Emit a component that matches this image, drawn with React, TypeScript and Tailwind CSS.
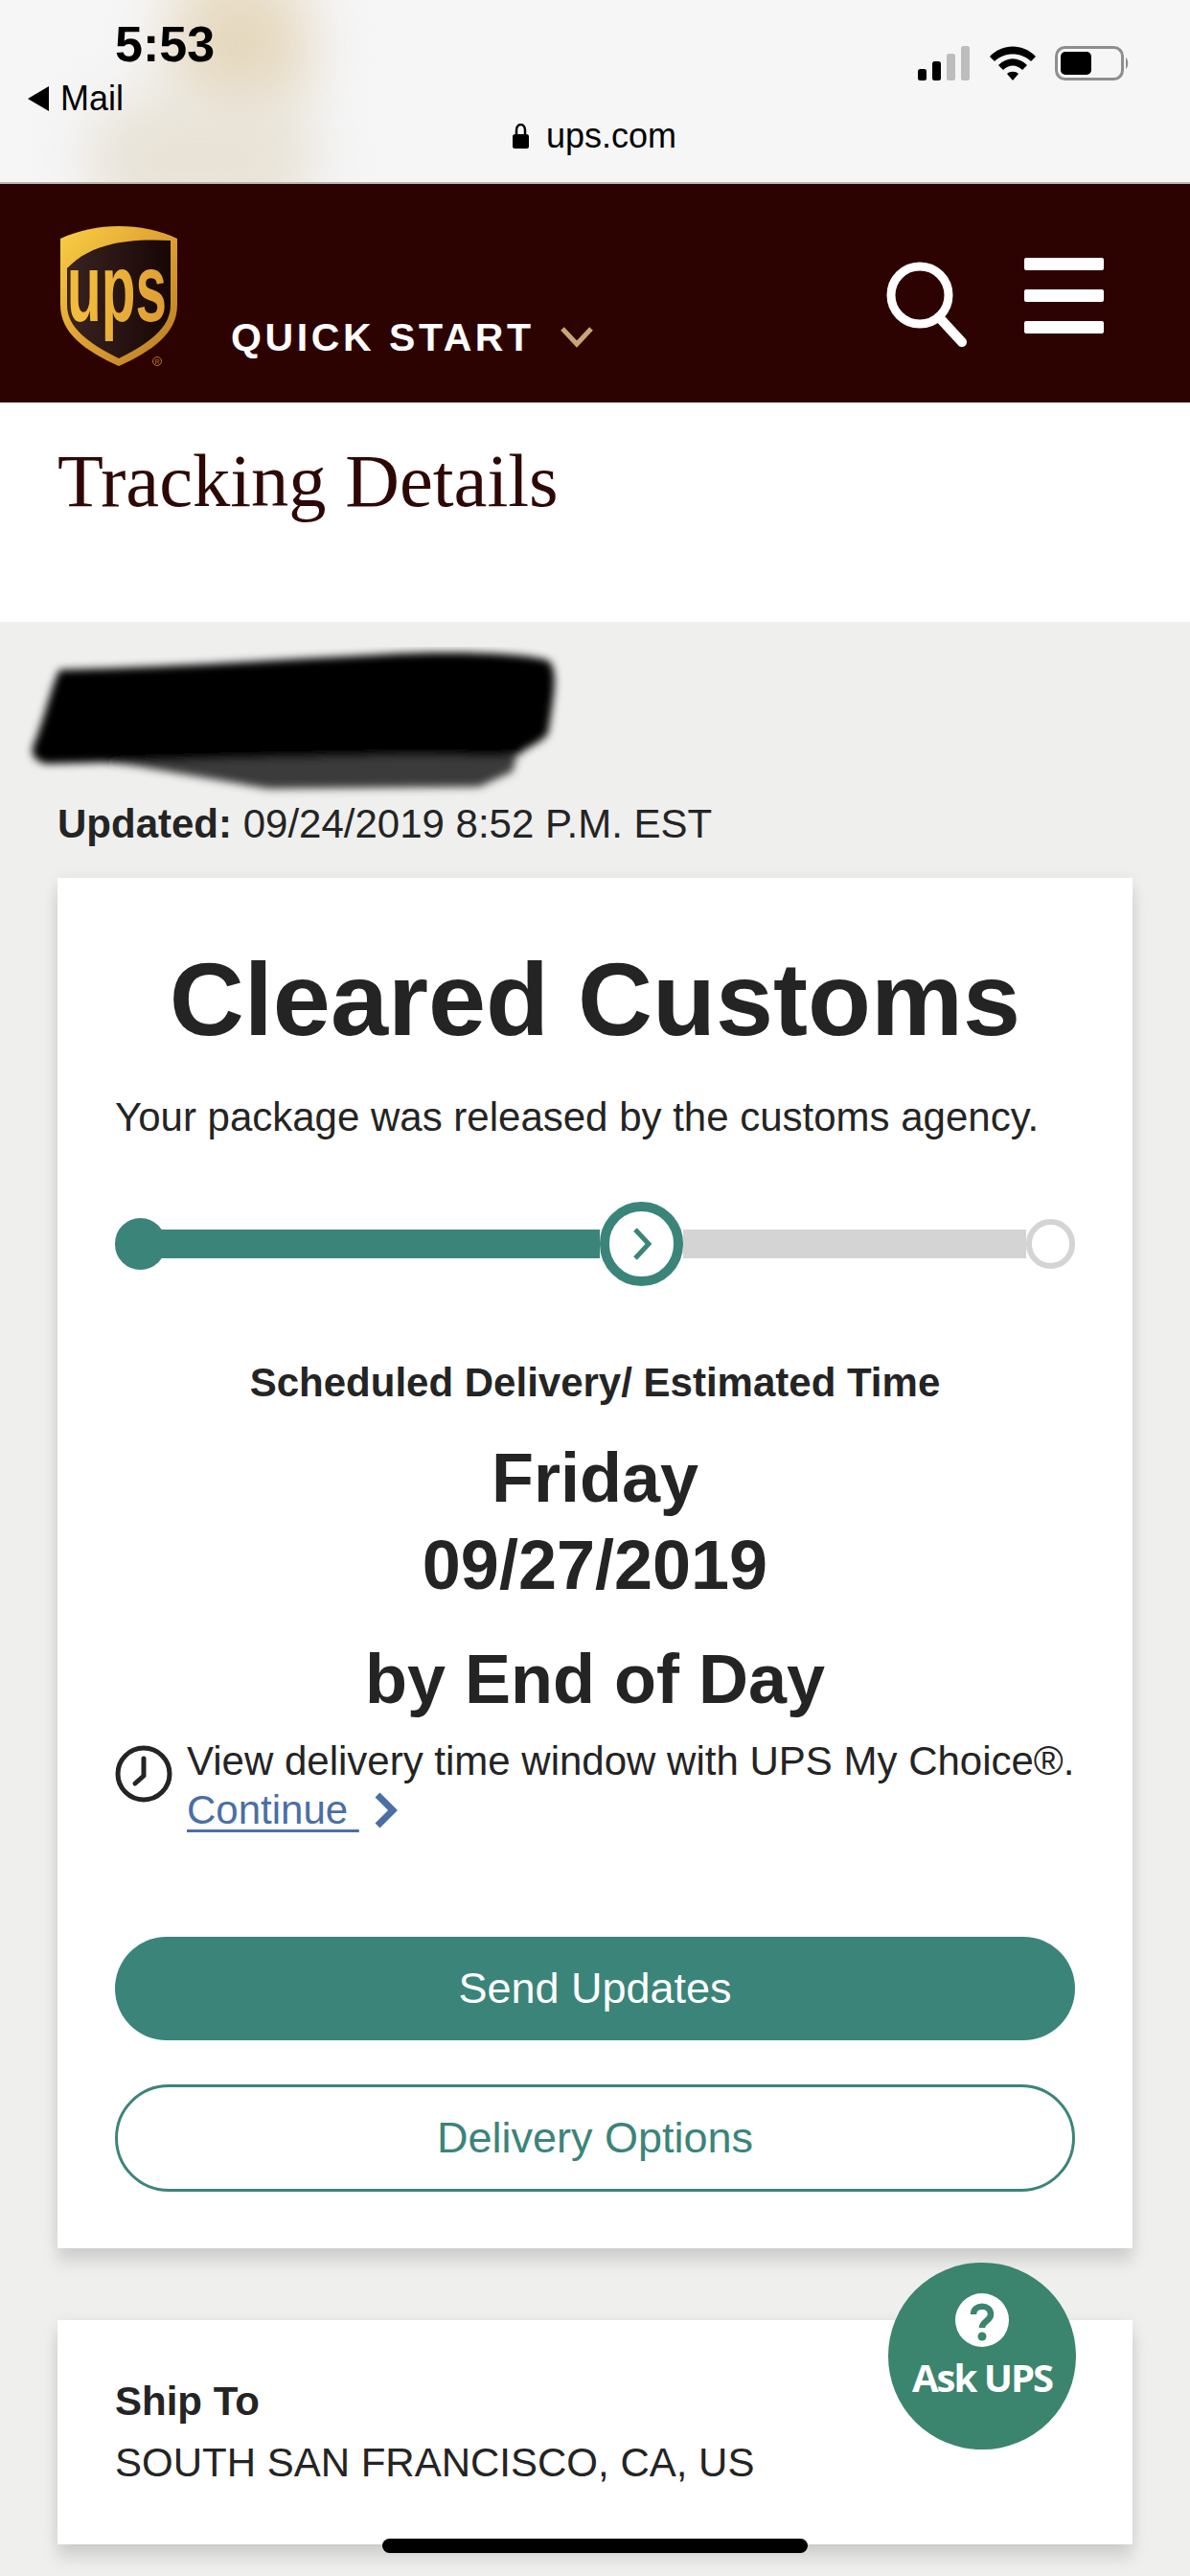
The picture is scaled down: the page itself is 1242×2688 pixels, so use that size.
const sans = "font-['Liberation_Sans',Arial,sans-serif]";

function Logo() {
  return (
    <svg width="130" height="156" viewBox="0 0 130 156" className="block overflow-visible">
      <defs>
        <linearGradient id="g" x1="0" y1="0" x2="1" y2="1">
          <stop offset="0" stopColor="#f9d044" />
          <stop offset="0.5" stopColor="#e0a032" />
          <stop offset="1" stopColor="#b57a22" />
        </linearGradient>
        <linearGradient id="t" gradientUnits="userSpaceOnUse" x1="0" y1="50" x2="130" y2="110">
          <stop offset="0" stopColor="#f2bb3c" />
          <stop offset="1" stopColor="#dc9b33" />
        </linearGradient>
        <linearGradient id="d" x1="0" y1="0" x2="1" y2="0">
          <stop offset="0" stopColor="#3a2320" />
          <stop offset="1" stopColor="#170605" />
        </linearGradient>
      </defs>
      <path d="M2 13 C22 4 42 0 63 0 C85 0 105 4 124 13 L124 82 C124 112 98 130 63 146 C28 130 2 112 2 82 Z" fill="url(#g)" />
      <path d="M9 44 C30 22 62 12 117 15 L117 82 C117 106 95 122 63 138 C31 122 9 106 9 82 Z" fill="url(#d)" />
      <text transform="translate(9 99) scale(0.585 1)" fontFamily="'Liberation Sans', Arial, sans-serif" fontWeight="700" fontSize="100" fill="url(#t)">ups</text>
      <circle cx="103" cy="141" r="4.5" fill="none" stroke="#b57a22" strokeWidth="1" />
      <text x="103" y="143.5" textAnchor="middle" fontFamily="'Liberation Sans', Arial, sans-serif" fontSize="7" fill="#b57a22">R</text>
    </svg>
  );
}

function StatusIcons() {
  return (
    <div className="flex items-end gap-[19px] absolute left-[958px] top-[48px]">
      <svg width="56" height="36" viewBox="0 0 56 36">
        <rect x="0" y="24" width="9" height="12" rx="2.5" fill="#000" />
        <rect x="15" y="16" width="9" height="20" rx="2.5" fill="#000" />
        <rect x="30" y="8" width="9" height="28" rx="2.5" fill="#bdbdbd" />
        <rect x="45" y="0" width="9" height="36" rx="2.5" fill="#bdbdbd" />
      </svg>
      <svg width="48" height="36" viewBox="0 0 48 36">
        <path d="M0 11 C13 -3 35 -3 48 11 L43 16 C33 6 15 6 5 16 Z" fill="#000" />
        <path d="M9 20 C18 11 30 11 39 20 L34 25 C28 19 20 19 14 25 Z" fill="#000" />
        <path d="M18 29 C21 26 27 26 30 29 L24 36 Z" fill="#000" />
      </svg>
      <svg width="78" height="36" viewBox="0 0 78 36" className="ml-[1px]">
        <rect x="1.5" y="1.5" width="69" height="33" rx="9" fill="none" stroke="#8e8e8e" strokeWidth="3" />
        <rect x="6" y="6" width="32" height="24" rx="5" fill="#000" />
        <path d="M74 12 C77 14 77 22 74 24 Z" fill="#8e8e8e" />
      </svg>
    </div>
  );
}

function Redaction() {
  return (
    <svg width="580" height="160" viewBox="0 0 580 160" className="block ml-[-40px] mt-[26px]">
      <defs>
        <filter id="b" x="-10%" y="-20%" width="120%" height="140%">
          <feGaussianBlur stdDeviation="4.5" />
        </filter>
      </defs>
      <g filter="url(#b)">
        <path d="M20 112 L120 124 L260 148 L480 146 L515 130 L525 90 L400 96 L18 100 Z" fill="#3a3a3a" />
        <path d="M42 24 C150 22 260 14 380 8 C450 4 520 6 552 14 C562 24 560 40 552 90 C546 100 530 104 522 112 C500 118 450 112 380 114 C250 116 100 120 28 122 C12 118 12 108 16 100 C28 70 34 40 42 24 Z" fill="#000" />
      </g>
    </svg>
  );
}

export default function App() {
  return (
    <div className={`relative h-[2688px] w-[1242px] overflow-hidden bg-[#efefee] text-[#242424] ${sans}`}>
      <div className="relative h-[192px] overflow-hidden border-b-2 border-[#b9b6b0] bg-[#f6f6f7]">
        <div className="absolute left-[175px] top-[-40px] h-[170px] w-[150px] rounded-full bg-[#e6d9c0] blur-[30px]" />
        <div className="absolute left-[90px] top-[100px] h-[130px] w-[240px] rounded-full bg-[#e8e2d6] blur-[30px]" />
        <div className="absolute left-[120px] top-[16px] text-[52px] font-bold leading-[60px] text-black">5:53</div>
        <div className="absolute left-[29px] top-[83px] flex items-center gap-[12px] text-[36px] leading-[40px] text-black">
          <svg width="22" height="26" viewBox="0 0 22 26"><path d="M22 0 V26 L0 13 Z" fill="#000" /></svg>
          <span>Mail</span>
        </div>
        <div className="absolute left-[535px] top-[122px] flex items-center gap-[18px] text-[36px] leading-[40px] text-black">
          <svg width="17" height="26" viewBox="0 0 17 26">
            <path d="M4 11 V7 C4 -1 13 -1 13 7 V11" fill="none" stroke="#000" strokeWidth="2.5" />
            <rect x="0" y="11" width="17" height="15" rx="2.5" fill="#000" />
          </svg>
          <span>ups.com</span>
        </div>
        <StatusIcons />
      </div>

      <header className="flex h-[228px] items-start bg-[#2d0302] pl-[61px] pr-[90px]">
        <div className="mt-[44px]"><Logo /></div>
        <div className="ml-[50px] mt-[136px] flex items-center gap-[27px]">
          <span className="text-[41px] font-bold leading-[48px] tracking-[3.6px] text-white">QUICK START</span>
          <svg width="34" height="22" viewBox="0 0 34 22"><path d="M2 2 L17 18 L32 2" fill="none" stroke="#c8a676" strokeWidth="5" /></svg>
        </div>
        <div className="ml-auto mt-[77px] flex items-start gap-[60px]">
          <svg width="84" height="90" viewBox="0 0 84 90" className="mt-[4px]">
            <circle cx="35" cy="35" r="30" fill="none" stroke="#fff" strokeWidth="9" />
            <path d="M55 58 L79 84" stroke="#fff" strokeWidth="10" strokeLinecap="round" />
          </svg>
          <div className="flex w-[83px] flex-col gap-[20px]">
            <div className="h-[13px] rounded-[2px] bg-white" />
            <div className="h-[13px] rounded-[2px] bg-white" />
            <div className="h-[13px] rounded-[2px] bg-white" />
          </div>
        </div>
      </header>

      <section className="h-[229px] bg-white px-[60px] pt-[38px]">
        <h1 className="font-['Liberation_Serif',Georgia,serif] text-[78.5px] leading-[88px] text-[#2e0806]">Tracking Details</h1>
      </section>

      <main className="px-[60px]">
        <Redaction />
        <p className="text-[42px] leading-[50px]"><b>Updated:</b> 09/24/2019 8:52 P.M. EST</p>

        <div className="mt-[31px] bg-white px-[60px] pb-[59px] pt-[63px] shadow-[0_14px_16px_rgba(0,0,0,0.12),0_0_14px_rgba(0,0,0,0.06)]">
          <h2 className="text-center text-[108px] font-bold leading-[128px]">Cleared Customs</h2>
          <p className="mt-[34px] whitespace-nowrap text-[42px] leading-[50px]">Your package was released by the customs agency.</p>

          <div className="mt-[62px] flex h-[90px] items-center">
            <div className="h-[54px] w-[53px] rounded-full bg-[#3b8479]" />
            <div className="ml-[-4px] h-[30px] w-[457px] bg-[#3b8479]" />
            <div className="flex h-[88px] w-[87px] items-center justify-center rounded-full border-[10px] border-[#3b8479] bg-white">
              <svg width="26" height="36" viewBox="0 0 26 36"><path d="M6 3 L20 18 L6 33" fill="none" stroke="#3b8479" strokeWidth="5" /></svg>
            </div>
            <div className="h-[30px] flex-1 bg-[#d4d4d4]" />
            <div className="h-[52px] w-[51px] rounded-full border-[6px] border-[#d4d4d4] bg-white" />
          </div>

          <p className="mt-[76px] text-center text-[42px] font-bold leading-[48px]">Scheduled Delivery/ Estimated Time</p>
          <p className="mt-[31px] text-center text-[72px] font-bold leading-[89px]">Friday</p>
          <p className="mt-[2px] text-center text-[72px] font-bold leading-[89px]">09/27/2019</p>
          <p className="mt-[30px] text-center text-[72px] font-bold leading-[89px]">by End of Day</p>

          <div className="mt-[15px] flex items-start gap-[15px]">
            <svg width="60" height="60" viewBox="0 0 60 60" className="mt-[9px] shrink-0">
              <circle cx="30" cy="30" r="27" fill="none" stroke="#242424" strokeWidth="5" />
              <path d="M30 14 V32 L21 40" fill="none" stroke="#242424" strokeWidth="5" strokeLinecap="round" strokeLinejoin="round" />
            </svg>
            <div className="whitespace-nowrap text-[42px] leading-[51px]">
              <div>View delivery time window with UPS My Choice®.</div>
              <div className="flex items-center">
                <span className="whitespace-pre text-[#4a6fa5] underline decoration-[3px] underline-offset-[6px]">Continue </span>
                <svg width="24" height="38" viewBox="0 0 24 38" className="ml-[16px]"><path d="M3 3 L19 19 L3 35" fill="none" stroke="#4a6fa5" strokeWidth="7" /></svg>
              </div>
            </div>
          </div>

          <button className="mt-[107px] block h-[108px] w-full rounded-full bg-[#3b8479] text-[45px] text-white">Send Updates</button>
          <button className="mt-[46px] block h-[112px] w-full rounded-full border-[3px] border-[#3b8479] bg-white text-[45px] text-[#3b8479]">Delivery Options</button>
        </div>

        <div className="mt-[75px] h-[234px] bg-white px-[60px] pt-[60px] shadow-[0_14px_16px_rgba(0,0,0,0.12),0_0_14px_rgba(0,0,0,0.06)]">
          <p className="text-[42px] font-bold leading-[50px]">Ship To</p>
          <p className="mt-[14px] text-[42px] leading-[50px]">SOUTH SAN FRANCISCO, CA, US</p>
        </div>
      </main>

      <div className="absolute left-[927px] top-[2361px] flex h-[195px] w-[196px] flex-col items-center rounded-full bg-[#3b846d] pt-[32px] text-white">
        <svg width="56" height="56" viewBox="0 0 56 56">
          <circle cx="28" cy="28" r="28" fill="#fff" />
          <path d="M19 22 C19 11 37 11 37 22 C37 29 28 29 28 36" fill="none" stroke="#3b846d" strokeWidth="6.5" />
          <circle cx="28" cy="45" r="4.5" fill="#3b846d" />
        </svg>
        <span className="mt-[7px] font-['Open_Sans',sans-serif] text-[40px] font-bold leading-[50px] tracking-[-2px]">Ask UPS</span>
      </div>
      <div className="absolute left-[399px] top-[2649px] h-[15px] w-[444px] rounded-full bg-black" />
    </div>
  );
}
